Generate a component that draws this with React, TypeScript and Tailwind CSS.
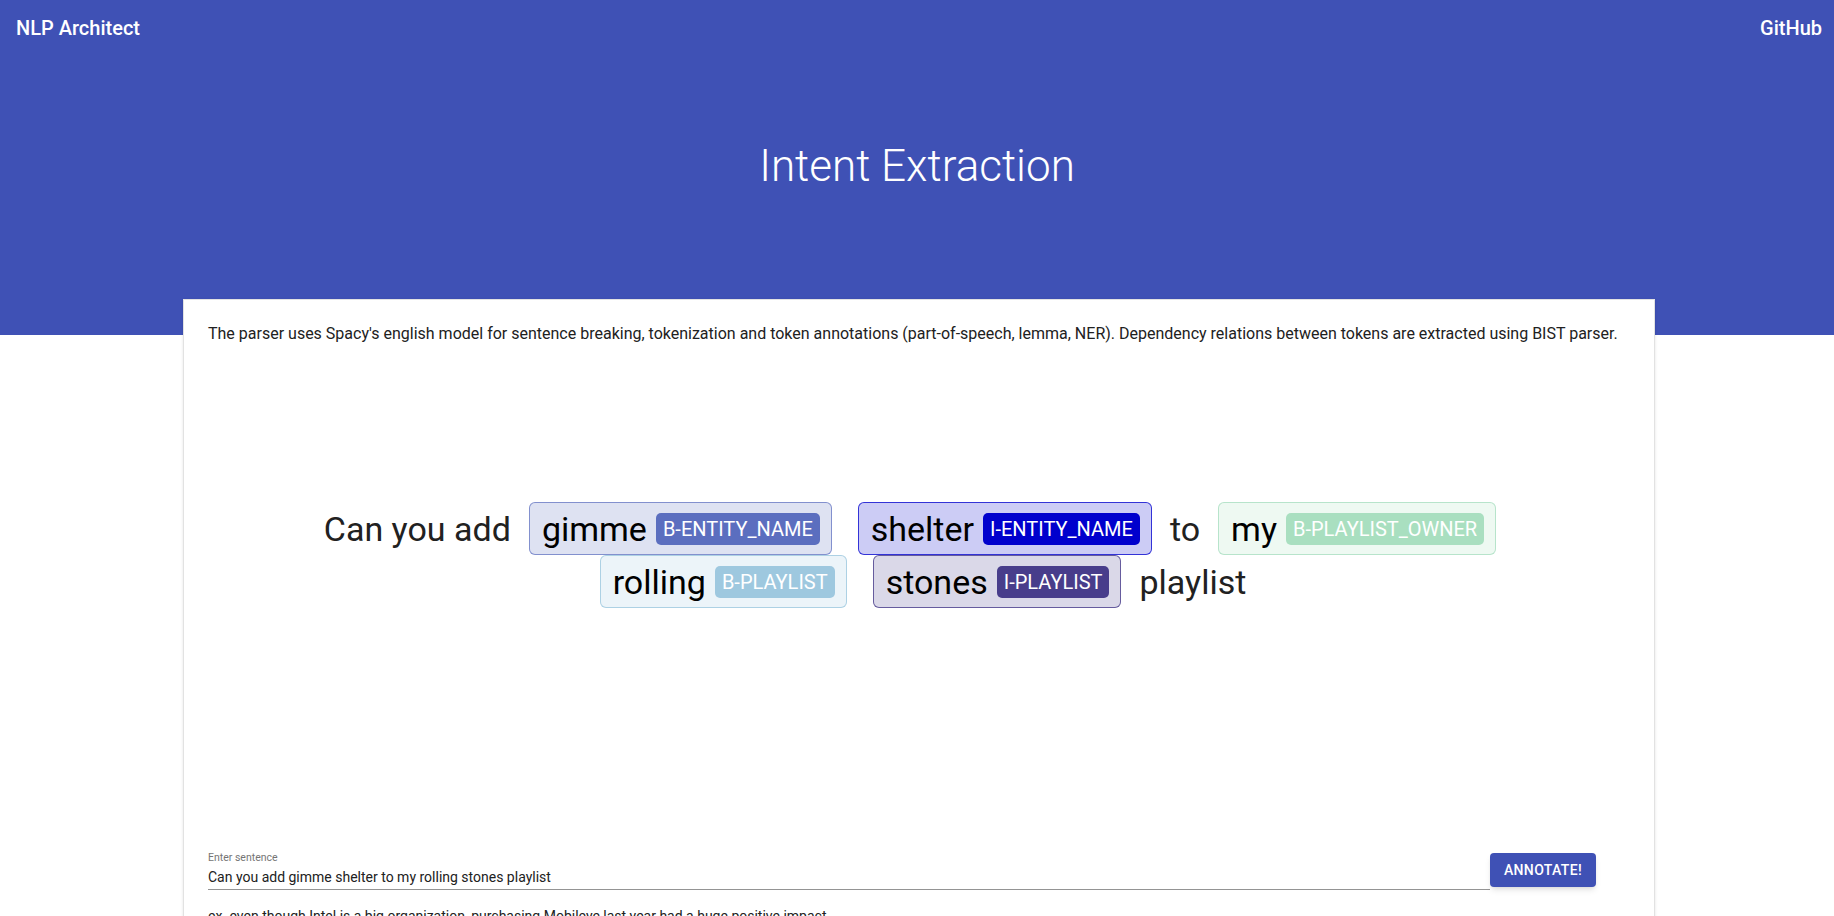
import React from 'react';

type Token = {
  word: string;
  tag?: string;
  box?: string;
  chip?: string;
};

const rows: Token[][] = [
  [
    { word: 'Can you add' },
    { word: 'gimme', tag: 'B-ENTITY_NAME', box: 'bg-[#dee2f2] border-[#5b6ebf]/70', chip: 'bg-[#5b6ebf]' },
    { word: 'shelter', tag: 'I-ENTITY_NAME', box: 'bg-[#ccccf5] border-[#0000cd]/75', chip: 'bg-[#0000cd]' },
    { word: 'to' },
    { word: 'my', tag: 'B-PLAYLIST_OWNER', box: 'bg-[#eef9f2] border-[#a9dfc0]/80', chip: 'bg-[#a9dfc0]' },
  ],
  [
    { word: 'rolling', tag: 'B-PLAYLIST', box: 'bg-[#ecf4f9] border-[#9ec8df]/80', chip: 'bg-[#9ec8df]' },
    { word: 'stones', tag: 'I-PLAYLIST', box: 'bg-[#dad8e8] border-[#483d8b]/80', chip: 'bg-[#483d8b]' },
    { word: 'playlist' },
  ],
];

function TokenView({ token }: { token: Token }) {
  if (!token.tag) {
    return <span className="mx-[5px] text-[34px] leading-10 text-[#212121]">{token.word}</span>;
  }
  return (
    <span className={`mx-[13px] inline-flex h-[53px] items-center gap-[9px] rounded-md border pl-[12px] pr-[11px] ${token.box}`}>
      <span className="text-[34px] leading-10 text-black">{token.word}</span>
      <span className={`h-8 rounded-[5px] px-[7px] text-[20px] leading-8 text-white ${token.chip}`}>{token.tag}</span>
    </span>
  );
}

export default function App() {
  return (
    <div className="min-h-screen bg-white font-['Roboto',sans-serif]">
      {/* Header */}
      <div className="h-[335px] bg-[#3f51b5] text-white">
        <div className="flex h-[55px] items-center justify-between pl-4 pr-3">
          <span className="text-[20px] font-medium">NLP Architect</span>
          <span className="text-[20px] font-medium">GitHub</span>
        </div>
        <h1 className="mt-[85px] text-center text-[44px] font-light leading-[52px]">Intent Extraction</h1>
      </div>

      {/* Card */}
      <div className="relative -mt-[36px] ml-[183px] w-[1472px] border border-[#e2e2e2] bg-white px-6 pb-10 pt-[22px] shadow-sm">
        <p className="text-[16px] leading-6 text-[#212121]">
          The parser uses Spacy's english model for sentence breaking, tokenization and token annotations (part-of-speech, lemma, NER). Dependency relations between tokens are extracted using BIST parser.
        </p>

        <div className="mt-[156px]">
          <div className="flex h-[53px] items-center justify-center pr-[10px]">
            {rows[0].map((t) => (
              <TokenView key={t.word} token={t} />
            ))}
          </div>
          <div className="flex h-[53px] items-center justify-center">
            {rows[1].map((t) => (
              <TokenView key={t.word} token={t} />
            ))}
          </div>
        </div>

        <div className="mt-[244px] flex items-end">
          <div className="w-[1282px]">
            <div className="text-[10.5px] leading-3 text-[#757575]">Enter sentence</div>
            <input
              className="h-[26px] w-full border-b border-[#949494] text-[14px] text-[#212121] outline-none"
              defaultValue="Can you add gimme shelter to my rolling stones playlist"
            />
          </div>
          <button className="mb-[3px] h-[34px] w-[106px] rounded bg-[#3f51b5] text-[14px] font-medium uppercase tracking-wide text-white shadow-md">
            Annotate!
          </button>
        </div>

        <p className="mt-4 text-[14px] leading-5 text-[#212121]">
          ex. even though Intel is a big organization, purchasing Mobileye last year had a huge positive impact
        </p>
      </div>
    </div>
  );
}
